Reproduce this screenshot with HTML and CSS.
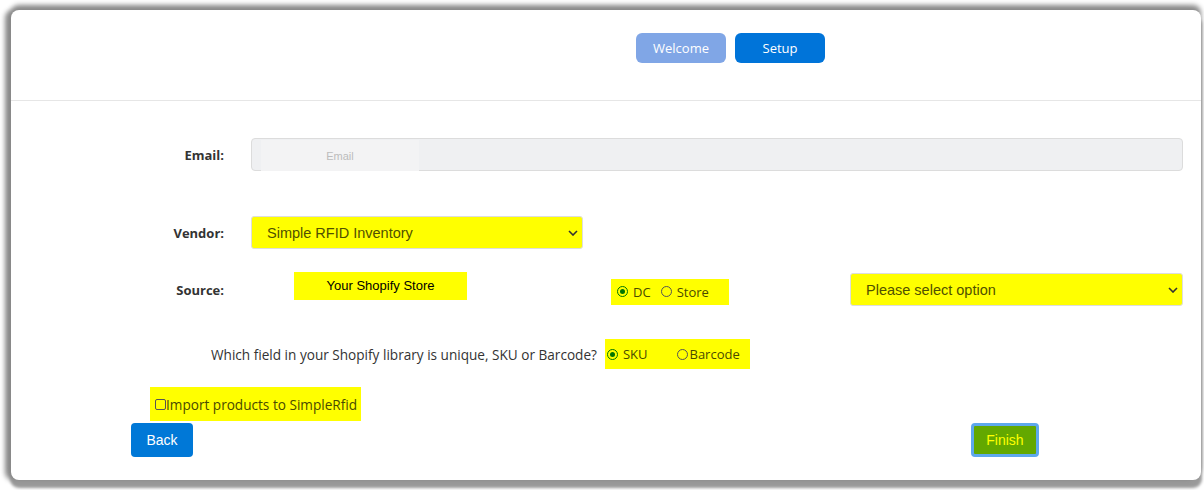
FILE: index.html
```html
<!DOCTYPE html>
<head>
    <title>Setup</title>
    <link rel="stylesheet" href="styles.css">
</head>
<body>
    <div class="card">
        <div class="steps">
            <button class="step done">Welcome</button>
            <button class="step active">Setup</button>
        </div>
        <div class="form">
            <div class="row email-row">
                <label class="label">Email:</label>
                <div class="email-box">
                    <input class="email-input" placeholder="Email" readonly>
                </div>
            </div>
            <div class="row vendor-row">
                <label class="label">Vendor:</label>
                <div class="select vendor-select">
                    <span>Simple RFID Inventory</span>
                    <svg class="chev" width="10" height="6" viewBox="0 0 10 6"><path d="M1 1l4 4 4-4" fill="none" stroke="#333" stroke-width="1.6"/></svg>
                </div>
            </div>
            <div class="row source-row">
                <label class="label">Source:</label>
                <div class="store mark">Your Shopify Store</div>
                <div class="radios mark dc">
                    <span class="radio on"></span><span class="rtext">DC</span>
                    <span class="radio"></span><span class="rtext">Store</span>
                </div>
                <div class="select option-select">
                    <span>Please select option</span>
                    <svg class="chev" width="10" height="6" viewBox="0 0 10 6"><path d="M1 1l4 4 4-4" fill="none" stroke="#333" stroke-width="1.6"/></svg>
                </div>
            </div>
            <div class="row question-row">
                <span class="question">Which field in your Shopify library is unique, SKU or Barcode?</span>
                <div class="radios mark sku">
                    <span class="radio on"></span><span class="rtext">SKU</span>
                    <span class="radio gap"></span><span class="rtext">Barcode</span>
                </div>
            </div>
            <div class="row import-row">
                <div class="import mark">
                    <span class="check"></span>Import products to SimpleRfid
                </div>
            </div>
            <div class="row buttons">
                <button class="btn back">Back</button>
                <button class="btn finish">Finish</button>
            </div>
        </div>
    </div>
</body>
</html>
```
FILE: styles.css
```css
html {
    background-color: #fff;
}
body {
    margin: 0;
    padding: 10px 3px 10px 11px;
    min-height: 100vh;
    box-sizing: border-box;
    font-family: "Open Sans", "Noto Sans", sans-serif;
    overflow: hidden;
}
.card {
    height: 470px;
    background-color: #fff;
    border-radius: 8px;
    box-shadow: 0 -5px 5px 0 #8a8a8a, -6px 0 5px 0 #8a8a8a, 0 7px 3px 1px #9a9a9a;
    box-sizing: border-box;
}
.steps {
    display: flex;
    gap: 9px;
    padding: 23px 0 0 625px;
    height: 91px;
    box-sizing: border-box;
    border-bottom: 1px solid #e6e6e6;
}
.step {
    width: 90px;
    height: 30px;
    border: none;
    border-radius: 6px;
    color: #fff;
    font-family: "Open Sans", sans-serif;
    font-size: 13px;
}
.done {
    background-color: #80a6e6;
}
.active {
    background-color: #0074d9;
}
.form {
    padding: 0 18px 0 139px;
}
.row {
    display: flex;
    align-items: center;
}
.label {
    width: 74px;
    margin-right: 27px;
    text-align: right;
    font-weight: bold;
    font-size: 13px;
    color: #333;
}
.email-row {
    margin-top: 37px;
}
.email-box {
    flex: 1;
    height: 33px;
    background-color: #eff0f2;
    border: 1px solid #dcdcdc;
    border-radius: 4px;
    box-sizing: border-box;
    padding: 1px 0 0 9px;
}
.email-input {
    width: 154px;
    height: 29px;
    border: none;
    background-color: #f3f3f4;
    text-align: center;
    font-family: "Liberation Sans", Arial, sans-serif;
    font-size: 11px;
    outline: none;
}
.email-input::placeholder {
    color: #bcbcbc;
}
.select {
    display: flex;
    align-items: center;
    justify-content: space-between;
    height: 33px;
    box-sizing: border-box;
    border: 1px solid #ddd;
    border-radius: 3px;
    background-color: #ffff00;
    color: #505000;
    font-family: "Liberation Sans", Arial, sans-serif;
    font-size: 14.5px;
    padding: 0 4px 0 15px;
}
.vendor-row {
    margin-top: 45px;
}
.vendor-select {
    width: 332px;
}
.mark {
    background-color: #ffff00;
}
.source-row {
    margin-top: 23px;
    height: 35px;
}
.store {
    margin-left: 43px;
    width: 173px;
    height: 28px;
    line-height: 28px;
    text-align: center;
    font-family: "Liberation Sans", Arial, sans-serif;
    font-size: 13px;
    color: #000;
    align-self: flex-start;
}
.radios {
    display: flex;
    align-items: center;
    font-size: 13px;
    color: #4a4a00;
}
.dc {
    margin-left: 144px;
    height: 26px;
    padding: 0 10px 0 6px;
    margin-top: 4px;
}
.radio {
    width: 11px;
    height: 11px;
    border: 1px solid #555;
    border-radius: 50%;
    margin-right: 5px;
    box-sizing: border-box;
    position: relative;
}
.radio.on {
    border-color: #007500;
}
.radio.on::after {
    content: "";
    position: absolute;
    left: 2px;
    top: 2px;
    width: 5px;
    height: 5px;
    border-radius: 50%;
    background-color: #007500;
}
.dc .rtext {
    margin-right: 10px;
}
.option-select {
    margin-left: auto;
    width: 333px;
}
.question-row {
    margin-top: 32px;
    padding-left: 61px;
}
.question {
    font-size: 13.6px;
    color: #333;
}
.sku {
    margin-left: 8px;
    height: 30px;
    padding: 0 10px 0 2px;
}
.radio.gap {
    margin-left: 29px;
    margin-right: 2px;
}
.import-row {
    margin-top: 18px;
}
.import {
    display: flex;
    align-items: center;
    height: 34px;
    padding: 0 4px 0 5px;
    font-size: 13.6px;
    color: #4a4a00;
}
.check {
    width: 11px;
    height: 11px;
    border: 1px solid #555;
    border-radius: 2px;
    box-sizing: border-box;
}
.buttons {
    margin-top: 2px;
    margin-left: -19px;
}
.btn {
    height: 34px;
    border: none;
    border-radius: 4px;
    font-family: "Liberation Sans", Arial, sans-serif;
    font-size: 14px;
    cursor: pointer;
}
.back {
    width: 62px;
    background-color: #0078d7;
    color: #fff;
}
.finish {
    width: 68px;
    margin-left: 778px;
    background-color: #63a800;
    color: #ffff00;
    border: 3px solid #5ea8ec;
}
```
